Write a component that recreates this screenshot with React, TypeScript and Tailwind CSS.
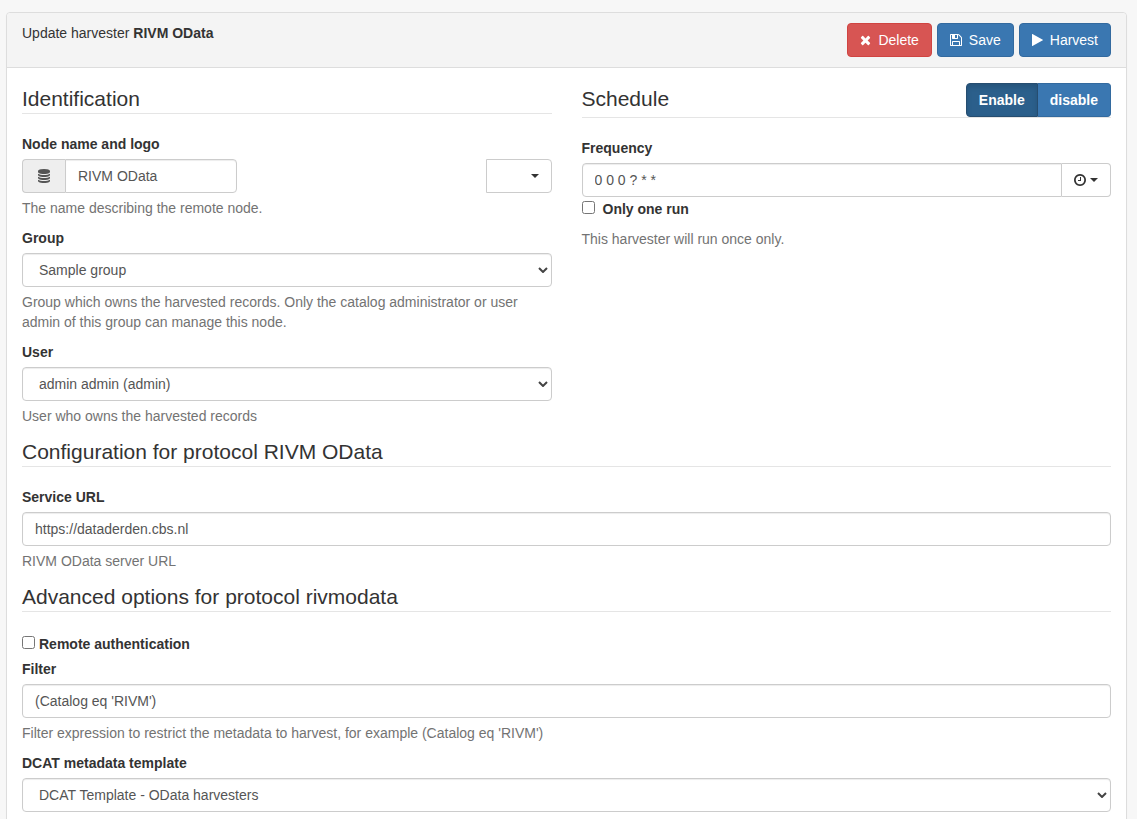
import { useState } from 'react';
import type { ReactNode } from 'react';
import clsx from 'clsx';

const icons = {
  times:
    'M1490 1322q0 40-28 68l-136 136q-28 28-68 28t-68-28l-294-294-294 294q-28 28-68 28t-68-28l-136-136q-28-28-28-68t28-68l294-294-294-294q-28-28-28-68t28-68l136-136q28-28 68-28t68 28l294 294 294-294q28-28 68-28t68 28l136 136q28 28 28 68t-28 68l-294 294 294 294q28 28 28 68z',
  save: 'M512 1536h768v-384h-768v384zm896 0h128v-896q0-14-10-38.5t-20-34.5l-281-281q-10-10-34-20t-39-10v416q0 40-28 68t-68 28h-576q-40 0-68-28t-28-68v-416h-128v1280h128v-416q0-40 28-68t68-28h832q40 0 68 28t28 68v416zm-384-928v-320q0-13-9.5-22.5t-22.5-9.5h-192q-13 0-22.5 9.5t-9.5 22.5v320q0 13 9.5 22.5t22.5 9.5h192q13 0 22.5-9.5t9.5-22.5zm640 32v928q0 40-28 68t-68 28h-1344q-40 0-68-28t-28-68v-1344q0-40 28-68t68-28h928q40 0 88 20t76 48l280 280q28 28 48 76t20 88z',
  play: 'M1576 927l-1328 738q-23 13-39.5 3t-16.5-36v-1472q0-26 16.5-36t39.5 3l1328 738q23 13 23 31t-23 31z',
  clock:
    'M1024 544v448q0 14-9 23t-23 9h-320q-14 0-23-9t-9-23v-64q0-14 9-23t23-9h224v-352q0-14 9-23t23-9h64q14 0 23 9t9 23zm416 352q0-148-73-273t-198-198-273-73-273 73-198 198-73 273 73 273 198 198 273 73 273-73 198-198 73-273zm224 0q0 209-103 385.5t-279.5 279.5-385.5 103-385.5-103-279.5-279.5-103-385.5 103-385.5 279.5-279.5 385.5-103 385.5 103 279.5 279.5 103 385.5z',
  database:
    'M896 768q237 0 443-43t325-127v170q0 69-103 128t-280 93.5-385 34.5-385-34.5-280-93.5-103-128v-170q119 84 325 127t443 43zm0 768q237 0 443-43t325-127v170q0 69-103 128t-280 93.5-385 34.5-385-34.5-280-93.5-103-128v-170q119 84 325 127t443 43zm0-384q237 0 443-43t325-127v170q0 69-103 128t-280 93.5-385 34.5-385-34.5-280-93.5-103-128v-170q119 84 325 127t443 43zm0-1152q208 0 385 34.5t280 93.5 103 128v128q0 69-103 128t-280 93.5-385 34.5-385-34.5-280-93.5-103-128v-128q0-69 103-128t280-93.5 385-34.5z',
};

type IconName = keyof typeof icons;

function Icon({ name }: { name: IconName }) {
  // times and play are narrower glyphs than the rest
  const narrow = name === 'times' || name === 'play';

  return (
    <svg
      viewBox={narrow ? '192 0 1408 1792' : '128 0 1536 1792'}
      className={clsx('h-3.5 shrink-0 fill-current', narrow ? 'w-[11px]' : 'w-3')}
      aria-hidden="true"
    >
      <path d={icons[name]} />
    </svg>
  );
}

function Caret() {
  return (
    <svg viewBox="0 0 8 4" className="h-1 w-2 shrink-0 fill-current" aria-hidden="true">
      <path d="M0 0h8L4 4z" />
    </svg>
  );
}

const inputClass =
  'h-[34px] w-full min-w-0 rounded border border-[#ccc] bg-white px-3 text-sm text-[#555] shadow-[inset_0_1px_1px_rgba(0,0,0,0.075)]';

const primaryClass = 'border-[#336a9f] bg-[#3a77b1] text-white hover:bg-[#2b5f8b]';

function ActionButton({
  icon,
  className,
  children,
}: {
  icon: IconName;
  className: string;
  children: ReactNode;
}) {
  return (
    <button
      type="button"
      className={clsx('flex h-[34px] items-center gap-[7px] rounded border px-3', className)}
    >
      <Icon name={icon} />
      {children}
    </button>
  );
}

function Label({ htmlFor, children }: { htmlFor: string; children: ReactNode }) {
  return (
    <label htmlFor={htmlFor} className="mb-[5px] block font-bold">
      {children}
    </label>
  );
}

function Help({ children }: { children: ReactNode }) {
  return <p className="mt-[5px] mb-2.5 text-[#737373]">{children}</p>;
}

function Legend({ title, children }: { title: string; children?: ReactNode }) {
  return (
    <legend className="mb-5 block w-full border-b border-[#e5e5e5]">
      <span className="flex justify-between">
        <span className="pt-0.5 text-[21px] leading-7">{title}</span>
        {children}
      </span>
    </legend>
  );
}

function Select({ id, options }: { id: string; options: string[] }) {
  return (
    <div className="relative">
      <select id={id} className={clsx(inputClass, 'block appearance-none pr-8 pl-4')}>
        {options.map((option) => (
          <option key={option}>{option}</option>
        ))}
      </select>
      <svg
        viewBox="0 0 10 6"
        className="pointer-events-none absolute top-3.5 right-1 h-1.5 w-2.5 fill-none stroke-[#444] stroke-2"
        aria-hidden="true"
      >
        <path d="M1 1l4 4 4-4" />
      </svg>
    </div>
  );
}

function Identification() {
  return (
    <fieldset className="min-w-0 flex-1">
      <Legend title="Identification" />

      <Label htmlFor="node-name">Node name and logo</Label>
      <div className="flex justify-between">
        <div className="flex w-[215px]">
          <span className="flex w-[43px] shrink-0 items-center justify-center rounded-l border border-r-0 border-[#ccc] bg-[#eee] text-[#555]">
            <Icon name="database" />
          </span>
          <input
            id="node-name"
            type="text"
            defaultValue="RIVM OData"
            className={clsx(inputClass, 'rounded-l-none')}
          />
        </div>
        <button
          type="button"
          aria-label="Choose logo"
          className="flex h-[34px] w-[66px] items-center justify-end rounded-r border border-[#ccc] bg-white px-3"
        >
          <Caret />
        </button>
      </div>
      <Help>The name describing the remote node.</Help>

      <Label htmlFor="group">Group</Label>
      <Select id="group" options={['Sample group']} />
      <Help>
        Group which owns the harvested records. Only the catalog administrator or user admin of
        this group can manage this node.
      </Help>

      <Label htmlFor="user">User</Label>
      <Select id="user" options={['admin admin (admin)']} />
      <Help>User who owns the harvested records</Help>
    </fieldset>
  );
}

function Schedule() {
  const [enabled, setEnabled] = useState(true);
  const active =
    'border-[#264d70] bg-[#2b5f8b] text-white shadow-[inset_0_3px_5px_rgba(0,0,0,0.125)]';

  return (
    <fieldset className="min-w-0 flex-1">
      <Legend title="Schedule">
        <span className="flex font-bold">
          <button
            type="button"
            aria-pressed={enabled}
            onClick={() => setEnabled(true)}
            className={clsx('h-[34px] rounded-l border px-3', enabled ? active : primaryClass)}
          >
            Enable
          </button>
          <button
            type="button"
            aria-pressed={!enabled}
            onClick={() => setEnabled(false)}
            className={clsx(
              'h-[34px] rounded-r border border-l-0 px-3',
              enabled ? primaryClass : active,
            )}
          >
            disable
          </button>
        </span>
      </Legend>

      <Label htmlFor="frequency">Frequency</Label>
      <div className="flex">
        <input
          id="frequency"
          type="text"
          defaultValue="0 0 0 ? * *"
          className={clsx(inputClass, 'rounded-r-none')}
        />
        <button
          type="button"
          aria-label="Choose frequency"
          className="flex h-[34px] shrink-0 items-center gap-1 rounded-r border border-l-0 border-[#ccc] bg-white px-3"
        >
          <Icon name="clock" />
          <Caret />
        </button>
      </div>
      <div className="mt-0.5 mb-2.5 flex gap-2">
        <input id="one-run" type="checkbox" className="mt-0.5 size-[13px]" />
        <label htmlFor="one-run" className="font-bold">
          Only one run
        </label>
      </div>
      <p className="text-[#737373]">This harvester will run once only.</p>
    </fieldset>
  );
}

export default function App() {
  return (
    <div className="min-h-screen bg-[#f7f7f7] pt-3 pr-2.5 pb-5 pl-1.5 font-['Liberation_Sans',Arial,sans-serif] text-sm leading-5 text-[#333]">
      <form className="rounded border border-[#ddd] bg-white shadow-[0_1px_1px_rgba(0,0,0,0.05)]">
        {/* Panel heading */}
        <div className="flex justify-between rounded-t border-b border-[#ddd] bg-[#f4f4f4] px-[15px] py-2.5">
          <h1>
            Update harvester <strong>RIVM OData</strong>
          </h1>
          <div className="flex gap-[5px]">
            <ActionButton
              icon="times"
              className="border-[#d04441] bg-[#d75553] text-white hover:bg-[#c9302c]"
            >
              Delete
            </ActionButton>
            <ActionButton icon="save" className={primaryClass}>
              Save
            </ActionButton>
            <ActionButton icon="play" className={primaryClass}>
              Harvest
            </ActionButton>
          </div>
        </div>

        <div className="p-[15px]">
          <div className="flex gap-[30px]">
            <Identification />
            <Schedule />
          </div>

          <fieldset>
            <Legend title="Configuration for protocol RIVM OData" />
            <Label htmlFor="service-url">Service URL</Label>
            <input
              id="service-url"
              type="text"
              defaultValue="https://dataderden.cbs.nl"
              className={clsx(inputClass, 'block')}
            />
            <Help>RIVM OData server URL</Help>
          </fieldset>

          <fieldset>
            <Legend title="Advanced options for protocol rivmodata" />
            <div className="mb-[5px] flex gap-1 pt-0.5">
              <input id="remote-auth" type="checkbox" className="mt-0.5 size-[13px]" />
              <label htmlFor="remote-auth" className="font-bold">
                Remote authentication
              </label>
            </div>

            <Label htmlFor="filter">Filter</Label>
            <input
              id="filter"
              type="text"
              defaultValue="(Catalog eq 'RIVM')"
              className={clsx(inputClass, 'block')}
            />
            <Help>
              Filter expression to restrict the metadata to harvest, for example (Catalog eq
              &apos;RIVM&apos;)
            </Help>

            <Label htmlFor="template">DCAT metadata template</Label>
            <Select id="template" options={['DCAT Template - OData harvesters']} />
          </fieldset>
        </div>
      </form>
    </div>
  );
}
